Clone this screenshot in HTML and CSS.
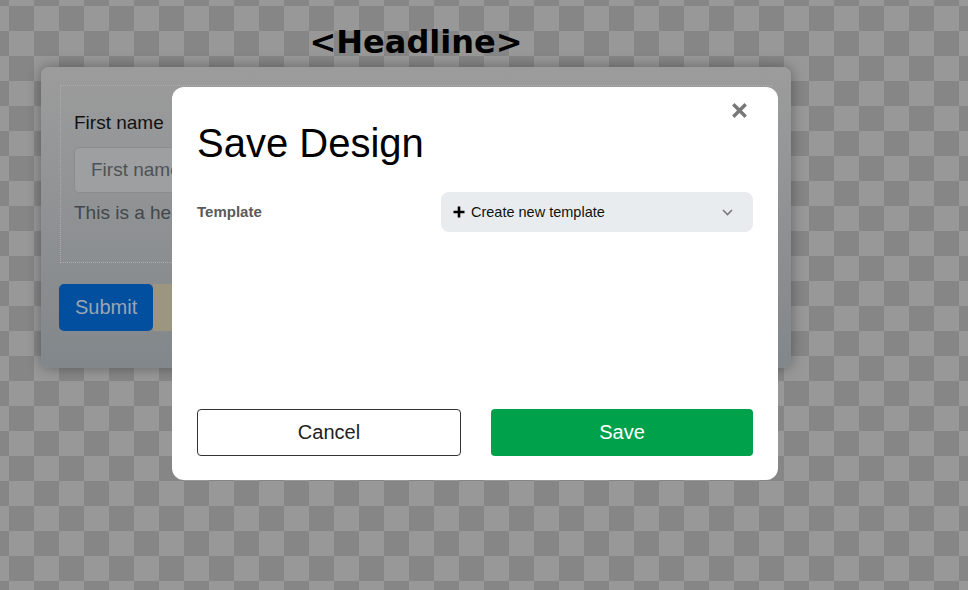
FILE: index.html
```html
<!DOCTYPE html>
<html lang="en">
  <head>
    <meta charset="UTF-8" />
    <meta name="viewport" content="width=device-width, initial-scale=1.0" />
    <title>Save Design</title>
    <link rel="stylesheet" href="styles.css">
  </head>
  <body>
    <div class="page">
      <h1 class="headline">&lt;Headline&gt;</h1>
      <div class="card">
        <div class="field-box">
          <label class="field-label" for="first-name">First name</label>
          <input class="field-input" id="first-name" type="text" placeholder="First name" />
          <p class="field-help">This is a help text</p>
        </div>
        <div class="card-actions">
          <button class="btn-submit">Submit</button>
          <button class="btn-reset">Reset</button>
        </div>
      </div>
    </div>

    <div class="modal">
      <button class="modal-close" aria-label="Close">
        <svg width="15" height="15" viewBox="0 0 15 15">
          <path d="M2.5 2.5 L12.5 12.5 M12.5 2.5 L2.5 12.5" stroke="#777" stroke-width="3.4" stroke-linecap="square" />
        </svg>
      </button>
      <h2 class="modal-title">Save Design</h2>

      <div class="modal-row">
        <span class="row-label">Template</span>
        <div class="select">
          <svg class="select-plus" width="12" height="12" viewBox="0 0 12 12">
            <path d="M6 0.5 V11.5 M0.5 6 H11.5" stroke="#000" stroke-width="2.6" />
          </svg>
          <span class="select-text">Create new template</span>
          <svg class="select-chevron" width="11" height="7" viewBox="0 0 11 7">
            <path d="M1 1 L5.5 5.5 L10 1" fill="none" stroke="#777" stroke-width="1.6" />
          </svg>
        </div>
      </div>

      <div class="modal-footer">
        <button class="btn-cancel">Cancel</button>
        <button class="btn-save">Save</button>
      </div>
    </div>
  </body>
</html>
```

FILE: styles.css
```css
html,
body {
  height: 100%;
}
body {
  margin: 0;
  font-family: "Liberation Sans", Arial, sans-serif;
  background: repeating-conic-gradient(#989898 0 25%, #868686 0 50%) 9px 6px / 50px 50px;
  overflow: hidden;
}
.page {
  width: 750px;
  padding: 22px 0 0 41px;
}
.headline {
  margin: 0 0 5px;
  font-family: "DejaVu Sans", sans-serif;
  font-weight: bold;
  font-size: 32px;
  line-height: 40px;
  text-align: center;
  color: #000;
}
.card {
  box-sizing: border-box;
  height: 301px;
  padding: 18px 19px 18px 18px;
  border-radius: 8px;
  background: linear-gradient(#9c9c9c, #82878b);
  box-shadow: 0 0 14px rgba(0, 0, 0, 0.35);
}
.field-box {
  box-sizing: border-box;
  height: 178px;
  margin-left: 1px;
  padding: 25px 14px 0 13px;
  border: 1px dotted #acacac;
}
.field-label {
  display: block;
  font-size: 19px;
  line-height: 24px;
  color: #111;
}
.field-input {
  display: block;
  box-sizing: border-box;
  width: 100%;
  height: 46px;
  margin-top: 12px;
  padding: 0 16px;
  font-family: inherit;
  font-size: 19px;
  background: #9d9fa1;
  border: 1px solid #8a8c8e;
  border-radius: 5px;
}
.field-input::placeholder {
  color: #4e5256;
}
.field-help {
  margin: 7px 0 0;
  font-size: 19px;
  line-height: 26px;
  color: #43474b;
}
.card-actions {
  display: flex;
  margin-top: 21px;
}
.card-actions button {
  height: 47px;
  padding: 0 16px;
  font-family: inherit;
  font-size: 20px;
  border: none;
}
.btn-submit {
  background: #024fa0;
  color: #9ba5b0;
  border-radius: 5px;
}
.card-actions .btn-reset {
  padding-left: 28px;
  background: #9c9580;
  color: #555;
}

.modal {
  position: absolute;
  left: 172px;
  top: 87px;
  box-sizing: border-box;
  width: 606px;
  height: 393px;
  padding: 32px 25px 24px;
  display: flex;
  flex-direction: column;
  background: #fff;
  border-radius: 12px;
}
.modal-close {
  position: absolute;
  top: 16px;
  right: 31px;
  width: 15px;
  height: 15px;
  padding: 0;
  border: none;
  background: none;
  line-height: 0;
}
.modal-title {
  margin: 0;
  font-size: 40px;
  font-weight: normal;
  line-height: 48px;
  color: #000;
}
.modal-row {
  display: grid;
  grid-template-columns: 244px 1fr;
  align-items: center;
  margin-top: 25px;
}
.row-label {
  font-size: 15px;
  font-weight: bold;
  line-height: 18px;
  color: #5a5a5a;
}
.select {
  display: flex;
  align-items: center;
  height: 40px;
  padding: 0 20px 0 12px;
  background: #e9ecef;
  border-radius: 8px;
}
.select-plus {
  margin-right: 6px;
}
.select-text {
  flex: 1;
  font-size: 14.5px;
  color: #111;
}
.modal-footer {
  display: flex;
  gap: 30px;
  margin-top: auto;
}
.modal-footer button {
  flex: 1;
  height: 47px;
  font-family: inherit;
  font-size: 20px;
  border-radius: 4px;
}
.btn-cancel {
  background: #fff;
  color: #222;
  border: 1px solid #333;
}
.btn-save {
  background: #00a14b;
  color: #fff;
  border: none;
}
```
